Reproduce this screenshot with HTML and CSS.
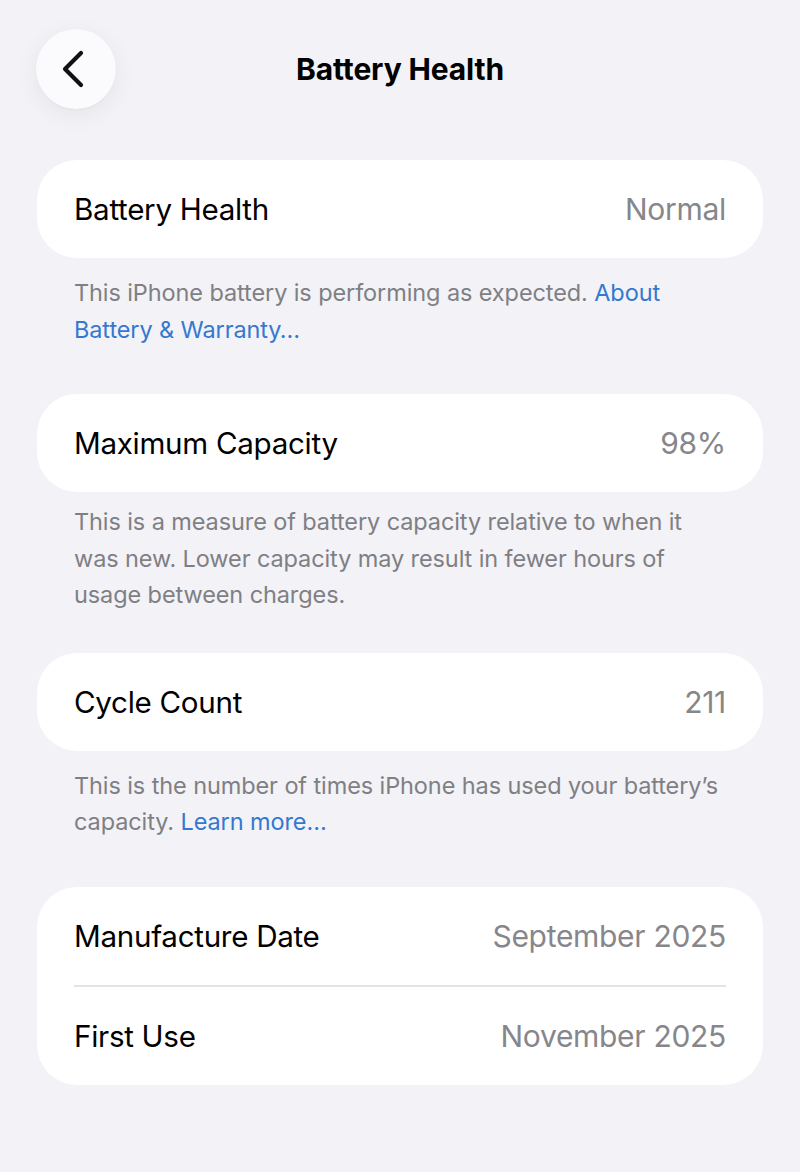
FILE: index.html
```html
<!DOCTYPE html>
<html lang="en">
<head>
<meta charset="utf-8">
<title>Battery Health</title>
<link rel="stylesheet" href="styles.css">
</head>
<body>
<div class="screen">
  <header class="nav">
    <button class="back" aria-label="Back">
      <svg viewBox="0 0 24 40" width="24" height="40" aria-hidden="true">
        <path d="M20 4 L4 20 L20 36" fill="none" stroke="#111" stroke-width="4.2" stroke-linecap="round" stroke-linejoin="round"/>
      </svg>
    </button>
    <h1 class="nav-title">Battery Health</h1>
    <span class="nav-spacer"></span>
  </header>

  <section class="group">
    <div class="card">
      <div class="row"><span class="label">Battery Health</span><span class="value">Normal</span></div>
    </div>
    <p class="footnote">This iPhone battery is performing as expected. <a class="link" href="#">About Battery &amp; Warranty…</a></p>
  </section>

  <section class="group group-tight">
    <div class="card">
      <div class="row"><span class="label">Maximum Capacity</span><span class="value">98%</span></div>
    </div>
    <p class="footnote">This is a measure of battery capacity relative to when it was new. Lower capacity may result in fewer hours of usage between charges.</p>
  </section>

  <section class="group">
    <div class="card">
      <div class="row"><span class="label">Cycle Count</span><span class="value">211</span></div>
    </div>
    <p class="footnote">This is the number of times iPhone has used your battery’s capacity. <a class="link" href="#">Learn more…</a></p>
  </section>

  <section class="group">
    <div class="card">
      <div class="row"><span class="label">Manufacture Date</span><span class="value">September 2025</span></div>
      <div class="row"><span class="label">First Use</span><span class="value">November 2025</span></div>
    </div>
  </section>
</div>
</body>
</html>
```

FILE: styles.css
```css
* {
  box-sizing: border-box;
}

html, body {
  margin: 0;
  background: #f2f2f7;
}

body {
  font-family: Inter, "Noto Sans", "Liberation Sans", sans-serif;
  color: #000;
  -webkit-font-smoothing: antialiased;
}

.screen {
  padding: 29px 37px 40px;
}

/* Top navigation bar: round back button + centred title */
.nav {
  display: grid;
  grid-template-columns: 80px 1fr 80px;
  align-items: center;
  height: 80px;
  margin: 0 -1px 51px;
}

.back {
  width: 80px;
  height: 80px;
  border: 0;
  padding: 0;
  border-radius: 50%;
  background: #fbfbfd;
  box-shadow: 0 6px 24px rgba(0, 0, 0, 0.06), 0 1px 3px rgba(0, 0, 0, 0.03);
  display: flex;
  align-items: center;
  justify-content: center;
}

.back svg {
  width: 24px;
  height: 40px;
  margin-left: -6px;
}

.nav-title {
  margin: 0;
  text-align: center;
  font-size: 30px;
  font-weight: 700;
  letter-spacing: -0.15px;
}

/* Grouped list */
.group {
  margin-bottom: 46px;
}

.card {
  background: #fff;
  border-radius: 40px;
  padding: 0 37px;
}

.row {
  display: flex;
  justify-content: space-between;
  align-items: center;
  height: 98px;
  font-size: 29.6px;
  letter-spacing: -0.3px;
}

.value {
  font-size: 30px;
}

.row + .row {
  border-top: 2px solid #e3e3e8;
  height: 100px;
}

.value {
  color: #86868b;
}

.footnote {
  margin: 17px 0 0;
  padding: 0 37px;
  font-size: 23.5px;
  line-height: 36.5px;
  color: #7f7f84;
  letter-spacing: -0.1px;
}

.group-tight .footnote {
  margin-top: 12px;
}

.group-tight {
  margin-bottom: 39px;
}

.link {
  color: #3478d0;
  text-decoration: none;
}
```
